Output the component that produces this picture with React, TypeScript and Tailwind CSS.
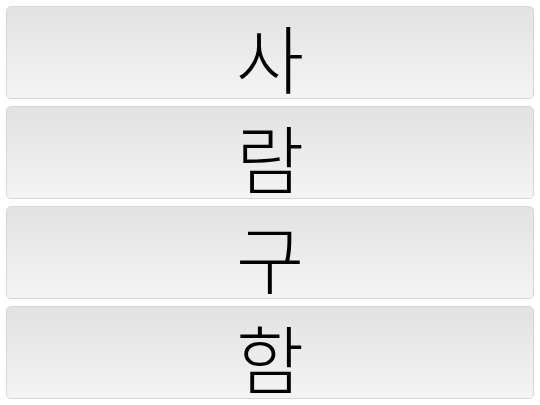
const syllables = ["사", "람", "구", "함"];

export default function App() {
  return (
    <div className="w-[540px] h-[405px] bg-white p-[6px] flex flex-col gap-[7px]">
      {syllables.map((s) => (
        <div
          key={s}
          className="flex-1 flex items-center justify-center rounded-[5px] border border-[#d6d6d6] bg-gradient-to-b from-[#e2e2e2] to-[#f4f4f4] pt-[6px]"
        >
          <span
            className="block text-black text-[74px] leading-none font-light"
            style={{ fontFamily: '"Noto Sans CJK KR", "Noto Sans", sans-serif' }}
          >
            {s}
          </span>
        </div>
      ))}
    </div>
  );
}
